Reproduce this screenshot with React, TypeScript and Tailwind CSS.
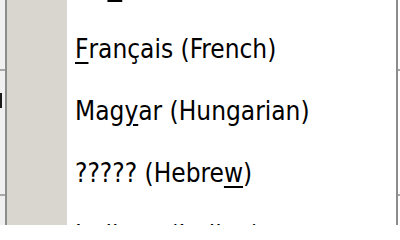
const items: { before: string; key: string; after: string }[] = [
  { before: 'De', key: 'u', after: 'tsch (German)' },
  { before: '', key: 'F', after: 'rançais (French)' },
  { before: 'Mag', key: 'y', after: 'ar (Hungarian)' },
  { before: '????? (Hebre', key: 'w', after: ')' },
  { before: 'Italiano (Italian)', key: '', after: '' },
];

function BackdropEdge({ side }: { side: 'left' | 'right' }) {
  return (
    <div
      className={
        side === 'left'
          ? 'relative flex w-[5px] shrink-0 flex-col bg-[#f0f0f0]'
          : 'relative flex w-[2px] shrink-0 flex-col bg-white'
      }
    >
      <div className="h-[69px]" />
      <div className="h-[2px] bg-[#a8a8a8]" />
      {side === 'left' && <div className="mt-[22px] h-[15px] w-[2px] bg-[#1a1a1a]" />}
      <div className={side === 'left' ? 'h-[86px]' : 'h-[123px]'} />
      <div className="h-[2px] bg-[#a8a8a8]" />
    </div>
  );
}

export default function App() {
  return (
    <main className="flex h-[225px] w-[400px] overflow-hidden bg-white">
      <BackdropEdge side="left" />
      <div className="flex min-w-0 flex-1 border-x-2 border-[#8c8c8c]">
        <div className="w-[60px] shrink-0 bg-[#d8d6ce]" />
        <ul className="-mt-[44px] flex-1 bg-white" style={{ fontFamily: '"DejaVu Sans Condensed", "DejaVu Sans", sans-serif' }}>
          {items.map((item) => (
            <li key={item.before + item.key} className="flex h-[62px] items-center whitespace-nowrap pl-[8px] text-[26px] text-black">
              {item.before}
              {item.key && <span className="underline decoration-2 underline-offset-4">{item.key}</span>}
              {item.after}
            </li>
          ))}
        </ul>
      </div>
      <BackdropEdge side="right" />
    </main>
  );
}
